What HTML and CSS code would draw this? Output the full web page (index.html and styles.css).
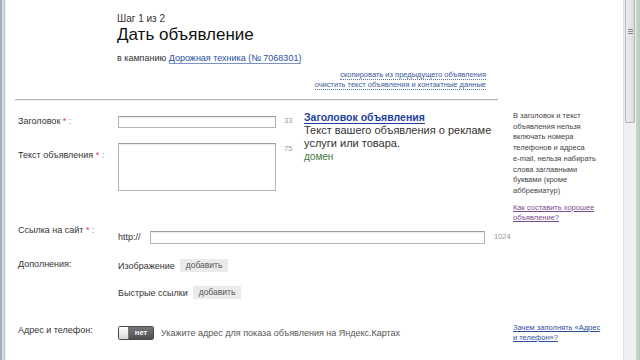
FILE: index.html
```html
<!DOCTYPE html>
<html lang="ru">
<head>
<meta charset="utf-8">
<title>Дать объявление</title>
<link rel="stylesheet" href="styles.css">
</head>
<body>
<div class="window">
  <div class="frame-left"></div>
  <div class="content">
    <div class="header">
      <div class="step">Шаг 1 из 2</div>
      <h1 class="title">Дать объявление</h1>
      <div class="campaign">в кампанию <a class="link" href="#">Дорожная техника (№ 7068301)</a></div>
    </div>
    <div class="actions">
      <a class="dotted" href="#">скопировать из предыдущего объявления</a><br>
      <a class="dotted" href="#">очистить текст объявления и контактные данные</a>
    </div>
    <div class="rule"></div>

    <div class="form">
      <div class="main">
        <div class="ad-grid">
          <div class="label l-title">Заголовок <span class="req">*</span> <span class="colon">:</span></div>
          <div class="input input-title"></div>
          <div class="counter c-title">33</div>
          <div class="preview">
            <a class="preview-title" href="#">Заголовок объявления</a>
            <div class="preview-text">Текст вашего объявления о рекламе услуги или товара.</div>
            <div class="preview-domain">домен</div>
          </div>
          <div class="label l-text">Текст объявления <span class="req">*</span> <span class="colon">:</span></div>
          <div class="input textarea"></div>
          <div class="counter c-text">75</div>
        </div>

        <div class="row row-link">
          <div class="label">Ссылка на сайт <span class="req">*</span> <span class="colon">:</span></div>
          <div class="http">http://</div>
          <div class="input input-url"></div>
          <div class="counter c-url">1024</div>
        </div>

        <div class="row row-extra">
          <div class="label">Дополнения:</div>
          <div class="field"><span>Изображение</span><span class="btn">добавить</span></div>
        </div>

        <div class="row row-quick">
          <div class="label"></div>
          <div class="field"><span>Быстрые ссылки</span><span class="btn">добавить</span></div>
        </div>
      </div>
      <div class="aside">
        <p class="help">В заголовок и текст<br>объявления нельзя<br>включать номера<br>телефонов и адреса<br>e-mail, нельзя набирать<br>слова заглавными<br>буквами (кроме<br>аббревиатур)</p>
        <a class="help-link" href="#">Как составить хорошее<br>объявление?</a>
      </div>
    </div>

    <div class="form address">
      <div class="main row row-address">
        <div class="label">Адрес и телефон:</div>
        <div class="field">
          <span class="toggle"><span class="knob"></span><span class="toggle-text">нет</span></span>
          <span class="hint">Укажите адрес для показа объявления на Яндекс.Картах</span>
        </div>
      </div>
      <div class="aside">
        <a class="why-link" href="#">Зачем заполнять «Адрес<br>и телефон»?</a>
      </div>
    </div>
  </div>
  <div class="scrollbar"><div class="thumb"><span class="grip"></span></div></div>
  <div class="frame-right"></div>
</div>
</body>
</html>
```

FILE: styles.css
```css
* { box-sizing: border-box; }
html, body { margin: 0; padding: 0; }
body {
  width: 640px;
  height: 360px;
  overflow: hidden;
  background: #fff;
  font-family: "Liberation Sans", Arial, sans-serif;
  color: #333;
}
a { text-decoration: none; }

.window { display: flex; height: 360px; }

.frame-left {
  width: 6px;
  flex: none;
  background: linear-gradient(to right, #a3afbd 0 2px, #d9dfe6 2px 4px, #b9c1cb 4px 5px, #f3f3f3 5px);
}
.content { flex: 1; overflow: hidden; }

.scrollbar {
  width: 13px;
  flex: none;
  background: #f0f0f0;
  border-left: 1px solid #dedede;
}
.thumb {
  height: 123px;
  margin: 0 1px;
  background: linear-gradient(to right, #ececec, #dcdcdc);
  border: 1px solid #b4b4b4;
  border-top: none;
  border-radius: 0 0 2px 2px;
  display: flex;
  justify-content: center;
  padding-top: 29px;
}
.grip {
  width: 5px;
  height: 6px;
  background: repeating-linear-gradient(to bottom, #8a8a8a 0 1px, transparent 1px 2px);
}
.frame-right {
  width: 4px;
  flex: none;
  background: linear-gradient(to right, #c9d6e2, #b5cfa8);
}

/* header */
.header { padding: 13px 0 0 111px; }
.step { font-size: 10px; line-height: 12px; color: #333; }
.title {
  margin: 0;
  font-size: 17px;
  line-height: 20px;
  font-weight: normal;
  color: #111;
}
.campaign { margin-top: 7px; font-size: 9px; line-height: 12px; color: #333; }
.link {
  color: #2c4f9e;
  border-bottom: 1px solid #7d93c4;
}

.actions {
  width: 480px;
  margin-top: 6px;
  text-align: right;
  font-size: 7.5px;
  line-height: 10px;
}
.dotted {
  color: #3c5a9c;
  border-bottom: 1px dotted #5a73ad;
}

.rule {
  margin: 9px 0 0 9px;
  width: 483px;
  height: 2px;
  border-top: 1px solid #b8b8b8;
  border-bottom: 1px solid #ececec;
}

/* form */
.form { display: flex; padding-left: 12px; margin-top: 10px; }
.main { width: 480px; flex: none; }
.aside { width: 100px; margin-left: 15px; }

.label { font-size: 9px; line-height: 12px; color: #333; }
.req { color: #e23b3b; }
.colon { color: #888; }
.counter { font-size: 7.5px; line-height: 12px; color: #999; padding-left: 8px; }

.input {
  border: 1px solid #b4b4b4;
  border-top-color: #9c9c9c;
  background: #fff;
  box-shadow: inset 0 1px 1px #ececec;
}

.ad-grid {
  display: grid;
  grid-template-columns: 100px 158px 28px 194px;
  grid-template-rows: 27px 60px;
}
.l-title { padding-top: 4px; }
.input-title { height: 12px; margin-top: 5px; }
.c-title { padding-top: 4px; }
.l-text { margin-top: 11px; }
.textarea { height: 48px; margin-top: 5px; }
.c-text { margin-top: 5px; }

.preview {
  grid-column: 4;
  grid-row: 1 / span 2;
  font-size: 11px;
  line-height: 13px;
}
.preview-title {
  display: table;
  font-size: 10.5px;
  line-height: 12px;
  font-weight: bold;
  color: #1d3f9c;
  border-bottom: 1px solid #1d3f9c;
}
.preview-text { font-size: 11px; line-height: 13px; color: #333; }
.preview-domain { font-size: 10px; line-height: 13px; color: #3c7a3c; }

.row { display: grid; grid-template-columns: 100px 1fr; }
.row-link {
  grid-template-columns: 100px 32px 335px 1fr;
  margin-top: 26px;
}
.http { font-size: 9px; line-height: 12px; padding-top: 7px; color: #333; }
.input-url { height: 13px; margin-top: 7px; }
.c-url { padding-top: 7px; padding-left: 9px; }

.field {
  display: flex;
  align-items: center;
  font-size: 9px;
  line-height: 12px;
  color: #333;
}
.row-extra { margin-top: 14px; }
.row-extra .field { margin-top: 1px; }
.row-quick { margin-top: 14px; }
.btn {
  margin-left: 5px;
  height: 13px;
  padding: 0 6px;
  background: #ebebeb;
  color: #555;
  font-size: 8.5px;
  line-height: 13px;
}

.address { margin-top: 23px; }
.row-address .label { padding-top: 2px; }
.toggle {
  display: inline-flex;
  width: 36px;
  height: 14px;
  border: 1px solid #4a4a4a;
  border-radius: 2px;
  overflow: hidden;
}
.knob {
  width: 10px;
  background: linear-gradient(to bottom, #ffffff, #d4d4d4);
  border-right: 1px solid #777;
}
.toggle-text {
  flex: 1;
  background: linear-gradient(to bottom, #777, #4e4e4e);
  color: #fff;
  font-weight: bold;
  font-size: 7.5px;
  line-height: 12px;
  text-align: center;
}
.hint { margin-left: 7px; color: #555; }

.help {
  margin: 0;
  font-size: 7.5px;
  line-height: 10.7px;
  color: #444;
}
.help-link, .why-link {
  display: inline-block;
  font-size: 7.5px;
  line-height: 10px;
  text-decoration: underline;
}
.help-link { margin-top: 6px; color: #7a4c93; }
.why-link { padding-top: 1px; color: #2d4f9e; }
```
